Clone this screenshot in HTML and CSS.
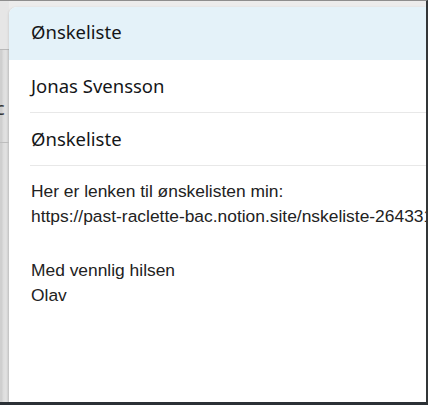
FILE: index.html
```html
<!DOCTYPE html>
<html lang="no">
<head>
<meta charset="utf-8">
<title>Ønskeliste</title>
<link rel="stylesheet" href="styles.css">
</head>
<body>
<div class="frame">
  <div class="side">
    <div class="side-row side-row-1"></div>
    <div class="side-row side-row-2"><span class="side-char">c</span></div>
    <div class="side-row side-row-3"></div>
  </div>
  <div class="panel">
    <div class="panel-header">Ønskeliste</div>
    <div class="field">Jonas Svensson</div>
    <div class="field">Ønskeliste</div>
    <div class="message">
      <p class="para">Her er lenken til ønskelisten min:<br><span class="nowrap">https://past-raclette-bac.notion.site/nskeliste-2643316c0b1e80d4</span></p>
      <p class="para">Med vennlig hilsen<br>Olav</p>
    </div>
  </div>
</div>
</body>
</html>
```

FILE: styles.css
```css
html, body {
  margin: 0;
  padding: 0;
}
body {
  width: 428px;
  height: 405px;
  overflow: hidden;
  background: #ebebeb;
}
.frame {
  box-sizing: border-box;
  width: 428px;
  height: 405px;
  border-top: 1px solid #8e8e8e;
  border-right: 2px solid #333638;
  border-bottom: 3px solid #2b3035;
  display: flex;
  background: #ececec;
  overflow: hidden;
}
.side {
  width: 9px;
  flex: none;
  display: flex;
  flex-direction: column;
  background: linear-gradient(to right, #cfcfcf 0, #cfcfcf 2px, #dcdcdc 3px, #e2e2e2 6px, #d6d6d6 8px, #cfcfcf 9px);
}
.side-row {
  box-sizing: border-box;
}
.side-row-1 {
  height: 49px;
  border-bottom: 1px solid #b9b9b9;
  background: #e6e6e6;
}
.side-row-2 {
  height: 93px;
  border-bottom: 1px solid #bdbdbd;
  position: relative;
  overflow: hidden;
}
.side-char {
  position: absolute;
  left: -4px;
  top: 48px;
  font-family: "Noto Sans", sans-serif;
  font-size: 18px;
  line-height: 20px;
  color: #333;
}
.side-row-3 {
  flex: 1;
}
.panel {
  flex: 1;
  margin-top: 6px;
  background: #ffffff;
  border-top-left-radius: 8px;
  box-shadow: -1px 0 2px rgba(0,0,0,0.08);
  overflow: hidden;
  display: flex;
  flex-direction: column;
  min-width: 0;
}
.panel-header {
  box-sizing: border-box;
  height: 53px;
  flex: none;
  display: flex;
  align-items: center;
  padding: 0 0 4px 22px;
  background: #e4f2f9;
  font-family: "Noto Sans", sans-serif;
  font-size: 18.5px;
  color: #141618;
}
.field {
  box-sizing: border-box;
  height: 53px;
  flex: none;
  display: flex;
  align-items: center;
  margin-left: 21px;
  padding: 0 0 2px 1px;
  border-bottom: 1px solid #e8e8e8;
  font-family: "Noto Sans", sans-serif;
  font-size: 18.5px;
  color: #141618;
}
.message {
  padding: 13px 0 0 22px;
  font-family: "Liberation Sans", Arial, sans-serif;
  font-size: 17.4px;
  line-height: 25px;
  color: #222222;
}
.para {
  margin: 0 0 29px 0;
}
.nowrap {
  white-space: nowrap;
}
```
